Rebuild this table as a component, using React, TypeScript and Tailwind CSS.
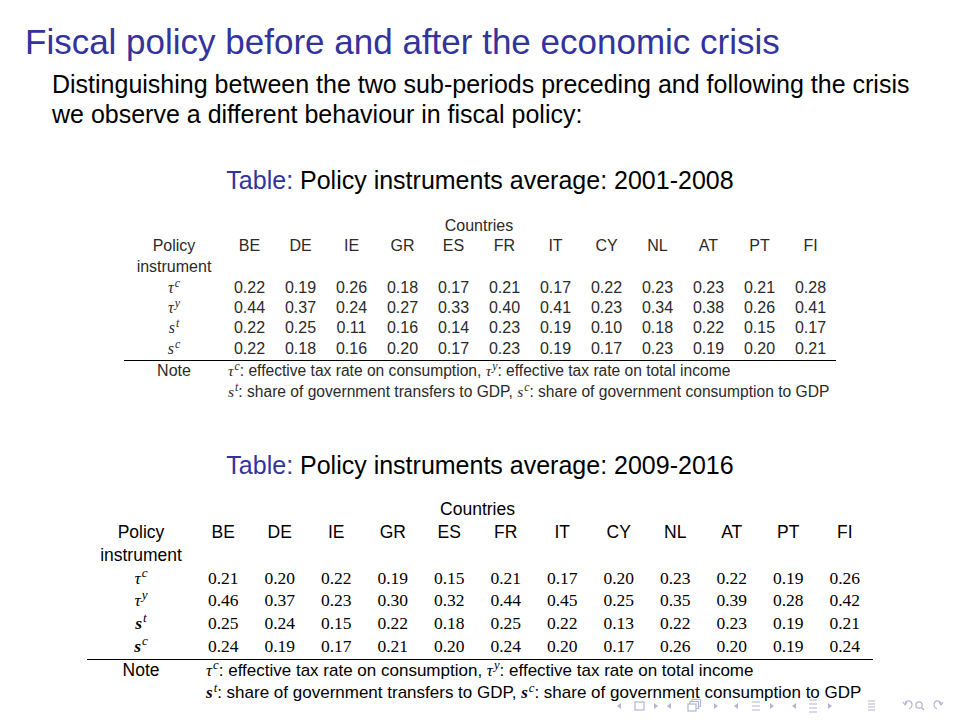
import React from "react";

const countries = ["BE", "DE", "IE", "GR", "ES", "FR", "IT", "CY", "NL", "AT", "PT", "FI"];

const before = [
  ["0.22", "0.19", "0.26", "0.18", "0.17", "0.21", "0.17", "0.22", "0.23", "0.23", "0.21", "0.28"],
  ["0.44", "0.37", "0.24", "0.27", "0.33", "0.40", "0.41", "0.23", "0.34", "0.38", "0.26", "0.41"],
  ["0.22", "0.25", "0.11", "0.16", "0.14", "0.23", "0.19", "0.10", "0.18", "0.22", "0.15", "0.17"],
  ["0.22", "0.18", "0.16", "0.20", "0.17", "0.23", "0.19", "0.17", "0.23", "0.19", "0.20", "0.21"],
];

const after = [
  ["0.21", "0.20", "0.22", "0.19", "0.15", "0.21", "0.17", "0.20", "0.23", "0.22", "0.19", "0.26"],
  ["0.46", "0.37", "0.23", "0.30", "0.32", "0.44", "0.45", "0.25", "0.35", "0.39", "0.28", "0.42"],
  ["0.25", "0.24", "0.15", "0.22", "0.18", "0.25", "0.22", "0.13", "0.22", "0.23", "0.19", "0.21"],
  ["0.24", "0.19", "0.17", "0.21", "0.20", "0.24", "0.20", "0.17", "0.26", "0.20", "0.19", "0.24"],
];

function Sym({ base, sup, bold }: { base: string; sup: string; bold?: boolean }) {
  return (
    <span className={"font-['Liberation_Serif'] italic " + (bold ? "font-bold" : "")}>
      {base}
      <sup className="ml-[1px] text-[0.75em] font-normal">{sup}</sup>
    </span>
  );
}

const symbols = [
  ["τ", "c"],
  ["τ", "y"],
  ["s", "t"],
  ["s", "c"],
];

type Look = {
  text: string;
  num: string;
  note: string;
  first: string;
  col: string;
  rowCountries: string;
  rowHead: string;
  rowInstr: string;
  rowData: string;
  rowLast: string;
  rowNote1: string;
  rowNote2: string;
  notePad: string;
  boldS: boolean;
};

const small: Look = {
  text: "text-[16px] text-[#2a2a2a]",
  num: "",
  note: "text-[15.6px]",
  first: "w-[100px]",
  col: "w-[51px]",
  rowCountries: "h-[20px]",
  rowHead: "h-[20px]",
  rowInstr: "h-[22px]",
  rowData: "h-[20px]",
  rowLast: "h-[22px] pb-[2px]",
  rowNote1: "h-[21px]",
  rowNote2: "h-[21px]",
  notePad: "pl-[4px]",
  boldS: false,
};

const large: Look = {
  text: "text-[17.5px] text-black",
  num: "font-['Liberation_Serif'] text-[17.5px]",
  note: "text-[17px]",
  first: "w-[108px]",
  col: "w-[56.5px]",
  rowCountries: "h-[22px]",
  rowHead: "h-[24px]",
  rowInstr: "h-[22px]",
  rowData: "h-[22.5px]",
  rowLast: "h-[24.5px] pb-[2px]",
  rowNote1: "h-[22px]",
  rowNote2: "h-[23px]",
  notePad: "pl-[11px]",
  boldS: true,
};

function PolicyTable({ data, look }: { data: string[][]; look: Look }) {
  return (
    <table className={"mx-auto table-fixed border-collapse leading-none " + look.text}>
      <colgroup>
        <col className={look.first} />
        {countries.map((c) => (
          <col key={c} className={look.col} />
        ))}
      </colgroup>
      <tbody>
        <tr className={look.rowCountries}>
          <td colSpan={5} />
          <td colSpan={2} className="text-center">Countries</td>
          <td colSpan={6} />
        </tr>
        <tr className={look.rowHead}>
          <td className="text-center">Policy</td>
          {countries.map((c) => (
            <td key={c} className="text-center">{c}</td>
          ))}
        </tr>
        <tr className={look.rowInstr}>
          <td className="text-center">instrument</td>
          <td colSpan={12} />
        </tr>
        {data.map((row, i) => (
          <tr
            key={i}
            className={
              i === data.length - 1 ? look.rowLast + " border-b border-black" : look.rowData
            }
          >
            <td className="text-center">
              <Sym base={symbols[i][0]} sup={symbols[i][1]} bold={look.boldS && symbols[i][0] === "s"} />
            </td>
            {row.map((v, j) => (
              <td key={j} className={"text-center " + look.num}>{v}</td>
            ))}
          </tr>
        ))}
        <tr className={look.rowNote1}>
          <td className="text-center">Note</td>
          <td colSpan={12} className={look.note + " whitespace-nowrap " + look.notePad}>
            <Sym base="τ" sup="c" />: effective tax rate on consumption, <Sym base="τ" sup="y" />: effective tax rate on total income
          </td>
        </tr>
        <tr className={look.rowNote2}>
          <td />
          <td colSpan={12} className={look.note + " whitespace-nowrap " + look.notePad}>
            <Sym base="s" sup="t" bold={look.boldS} />: share of government transfers to GDP, <Sym base="s" sup="c" bold={look.boldS} />: share of government consumption to GDP
          </td>
        </tr>
      </tbody>
    </table>
  );
}

function Caption({ years }: { years: string }) {
  return (
    <p className="text-center text-[25px] leading-[28px]">
      <span className="text-[#33339e]">Table:</span> Policy instruments average: {years}
    </p>
  );
}

function NavBar() {
  const c = "#b4b4d4";
  return (
    <svg
      className="absolute left-[612px] top-[698px]"
      width="340"
      height="16"
      viewBox="0 0 340 16"
      fill="none"
      stroke={c}
      strokeWidth="1.2"
    >
      {/* slide */}
      <path d="M9 5 L5 8 L9 11 Z" fill={c} stroke="none" />
      <rect x="23" y="4" width="9" height="8" />
      <path d="M42 5 L46 8 L42 11 Z" fill={c} stroke="none" />
      {/* frame */}
      <path d="M59 5 L55 8 L59 11 Z" fill={c} stroke="none" />
      <rect x="76" y="6" width="8" height="7" />
      <path d="M78 6 V3.5 H86.5 V10.5 H84" />
      <path d="M80 3.5 V1.5 H88.5 V8.5 H86.5" />
      <path d="M102 5 L106 8 L102 11 Z" fill={c} stroke="none" />
      {/* subsection */}
      <path d="M126 5 L122 8 L126 11 Z" fill={c} stroke="none" />
      <path d="M140 4 H148 M140 8 H148 M140 12 H148" />
      <path d="M158 5 L162 8 L158 11 Z" fill={c} stroke="none" />
      {/* section */}
      <path d="M184 5 L180 8 L184 11 Z" fill={c} stroke="none" />
      <path d="M197 2 H205 M197 6 H205 M197 10 H205 M197 14 H205" />
      <path d="M216 5 L220 8 L216 11 Z" fill={c} stroke="none" />
      {/* document */}
      <path d="M256 3 H263 M256 6 H263 M256 9 H263 M256 12 H263" />
      {/* back / search / forward */}
      <path d="M293 6 C293 3 297 2 299 4 C301 6 300 10 297 11" />
      <path d="M291 4 L293 7 L295 4" />
      <circle cx="307" cy="7" r="3.2" />
      <path d="M309.5 9.5 L312 12" />
      <path d="M329 6 C329 3 325 2 323 4 C321 6 322 10 325 11" />
      <path d="M327 4 L329 7 L331 4" />
    </svg>
  );
}

export default function App() {
  return (
    <div className="relative h-[720px] w-[960px] overflow-hidden bg-white font-['Liberation_Sans'] text-black">
      <h1 className="pl-[25px] pt-[22px] text-[35px] leading-[40px] text-[#33339e]">
        Fiscal policy before and after the economic crisis
      </h1>
      <p className="mt-[7px] pl-[52px] text-[25px] leading-[30px]">
        Distinguishing between the two sub-periods preceding and following the crisis
        <br />
        we observe a different behaviour in fiscal policy:
      </p>

      <div className="mt-[37px]">
        <Caption years="2001-2008" />
      </div>
      <div className="mt-[22px]">
        <PolicyTable data={before} look={small} />
      </div>

      <div className="mt-[49px]">
        <Caption years="2009-2016" />
      </div>
      <div className="mt-[20px]">
        <PolicyTable data={after} look={large} />
      </div>

      <NavBar />
    </div>
  );
}
